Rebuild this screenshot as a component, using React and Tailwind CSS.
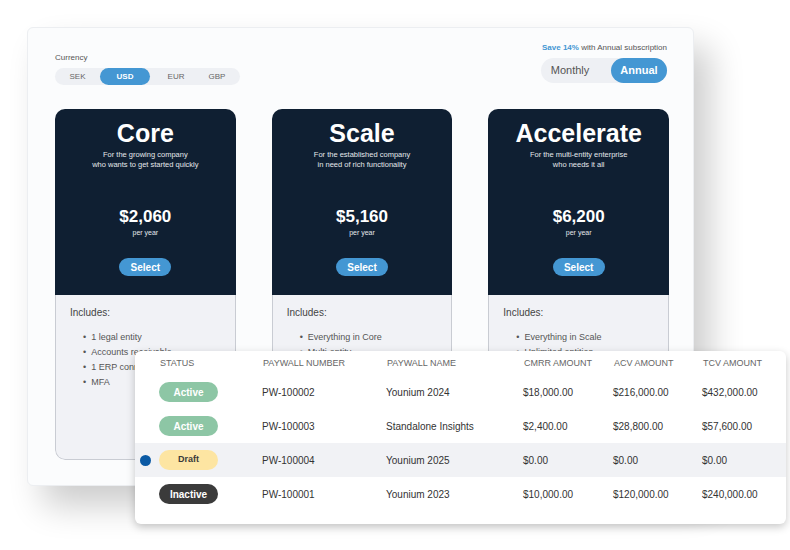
const plans = [
  {
    name: "Core",
    sub: ["For the growing company", "who wants to get started quickly"],
    price: "$2,060",
    items: ["1 legal entity", "Accounts receivable", "1 ERP connector", "MFA"],
  },
  {
    name: "Scale",
    sub: ["For the established company", "in need of rich functionality"],
    price: "$5,160",
    items: ["Everything in Core", "Multi-entity", "Revenue recognition", "SSO"],
  },
  {
    name: "Accelerate",
    sub: ["For the multi-entity enterprise", "who needs it all"],
    price: "$6,200",
    items: ["Everything in Scale", "Unlimited entities", "Custom reports", "Priority support"],
  },
];

const rows = [
  { status: "Active", num: "PW-100002", name: "Younium 2024", cmrr: "$18,000.00", acv: "$216,000.00", tcv: "$432,000.00" },
  { status: "Active", num: "PW-100003", name: "Standalone Insights", cmrr: "$2,400.00", acv: "$28,800.00", tcv: "$57,600.00" },
  { status: "Draft", num: "PW-100004", name: "Younium 2025", cmrr: "$0.00", acv: "$0.00", tcv: "$0.00", selected: true },
  { status: "Inactive", num: "PW-100001", name: "Younium 2023", cmrr: "$10,000.00", acv: "$120,000.00", tcv: "$240,000.00" },
];

const badgeStyles = {
  Active: "bg-[#8dc6a5] text-white",
  Draft: "bg-[#fde5a2] text-[#3a3a3a]",
  Inactive: "bg-[#3b3b3b] text-white",
};

const cols = "grid grid-cols-[103px_124px_137px_90px_89px_1fr] items-center";

function PlanCard({ plan }) {
  return (
    <div className="w-[181px] h-[351px] flex flex-col rounded-[10px] overflow-hidden">
      <div className="h-[186px] bg-[#0f1f32] flex flex-col items-center pt-[11px]">
        <div className="text-[25px] leading-[26px] font-bold text-white">{plan.name}</div>
        <div className="mt-[4px] text-[7.5px] leading-[10px] text-[#e4e7eb] text-center">
          {plan.sub.map((s) => (
            <div key={s}>{s}</div>
          ))}
        </div>
        <div className="mt-[38px] text-[17px] leading-[18px] font-bold text-white">{plan.price}</div>
        <div className="mt-[2px] text-[7px] leading-[10px] text-[#e4e7eb]">per year</div>
        <button className="mt-[20px] w-[52px] h-[18px] rounded-full bg-[#4497d3] text-white text-[10px] font-bold">
          Select
        </button>
      </div>
      <div className="flex-1 bg-[#f1f2f6] border border-t-0 border-[#c9ccd3] rounded-b-[10px] pl-[14px] pt-[13px]">
        <div className="text-[10px] leading-[10px] text-[#444] font-medium">Includes:</div>
        <ul className="mt-[12px] pl-[13px]">
          {plan.items.map((it) => (
            <li key={it} className="flex gap-[5px] text-[9px] leading-[15px] text-[#555]">
              <span>•</span>
              <span>{it}</span>
            </li>
          ))}
        </ul>
      </div>
    </div>
  );
}

export default function App() {
  return (
    <div className="relative w-[790px] h-[550px] bg-white overflow-hidden font-['Liberation_Sans',Arial,sans-serif]">
      {/* pricing panel */}
      <div className="ml-[27px] mt-[27px] w-[667px] h-[459px] bg-[#fbfcfd] border border-[#eceef1] rounded-[6px] shadow-[16px_20px_34px_rgba(0,0,0,0.2)] pl-[27px] pr-[24px] pt-[15px]">
        <div className="flex justify-between items-start">
          <div className="mt-[10px]">
            <div className="text-[8px] leading-[10px] text-[#555]">Currency</div>
            <div className="mt-[5px] w-[185px] h-[17px] bg-[#eef0f4] rounded-full flex items-center text-[8px] text-[#666]">
              <span className="w-[45px] text-center">SEK</span>
              <span className="w-[50px] h-[17px] rounded-full bg-[#4497d3] text-white font-bold flex items-center justify-center">
                USD
              </span>
              <span className="w-[52px] text-center">EUR</span>
              <span className="w-[30px] text-center">GBP</span>
            </div>
          </div>
          <div className="flex flex-col items-end mr-[2px]">
            <div className="text-[8px] leading-[10px] text-[#555]">
              <span className="text-[#4497d3] font-bold">Save 14%</span> with Annual subscription
            </div>
            <div className="mt-[5px] w-[126px] h-[25px] bg-[#eef0f4] rounded-full flex items-center text-[11px]">
              <span className="w-[58px] text-center text-[#555]">Monthly</span>
              <span className="ml-[12px] w-[56px] h-[25px] rounded-full bg-[#4497d3] text-white font-bold flex items-center justify-center">
                Annual
              </span>
            </div>
          </div>
        </div>
        <div className="mt-[24px] flex gap-[36px]">
          {plans.map((p) => (
            <PlanCard key={p.name} plan={p} />
          ))}
        </div>
      </div>

      {/* paywall table overlay */}
      <div className="absolute left-[135px] top-[351px] w-[651px] h-[173px] bg-white rounded-[6px] shadow-[0_3px_9px_rgba(0,0,0,0.22)] pt-[2px]">
        <div className={`${cols} h-[22px] pl-[25px] text-[9px] text-[#666]`}>
          <span>STATUS</span>
          <span>PAYWALL NUMBER</span>
          <span>PAYWALL NAME</span>
          <span>CMRR AMOUNT</span>
          <span>ACV AMOUNT</span>
          <span>TCV AMOUNT</span>
        </div>
        {rows.map((r) => (
          <div
            key={r.num}
            className={`relative ${cols} h-[34px] pl-[24px] text-[10px] text-[#333] ${r.selected ? "bg-[#f1f2f5]" : ""}`}
          >
            {r.selected && (
              <span className="absolute left-[5px] top-[12px] w-[11px] h-[11px] rounded-full bg-[#0b5aa5]" />
            )}
            <span
              className={`w-[59px] h-[20px] rounded-full flex items-center justify-center font-bold ${
                r.status === "Draft" ? "text-[9px]" : "text-[10px]"
              } ${badgeStyles[r.status]}`}
            >
              {r.status}
            </span>
            <span>{r.num}</span>
            <span>{r.name}</span>
            <span>{r.cmrr}</span>
            <span>{r.acv}</span>
            <span>{r.tcv}</span>
          </div>
        ))}
      </div>
    </div>
  );
}
